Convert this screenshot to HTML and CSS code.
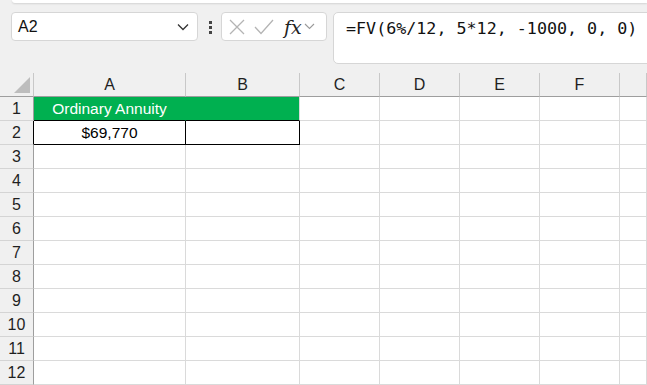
FILE: index.html
```html
<!DOCTYPE html>
<html lang="en">
<head>
<meta charset="UTF-8">
<meta name="viewport" content="width=device-width, initial-scale=1.0">
<title>Ordinary Annuity</title>
<link rel="stylesheet" href="styles.css">
</head>
<body>
    <div id="ribbon-edge"></div>
    <div id="toolbar">
        <div id="name-box">
            <span>A2</span>
            <svg width="12" height="8" viewBox="0 0 12 8"><path d="M1 1.5 L6 6.5 L11 1.5" fill="none" stroke="#333" stroke-width="1.3"/></svg>
        </div>
        <div id="dots"><i></i><i></i><i></i></div>
        <div id="func-box">
            <svg width="16" height="16" viewBox="0 0 16 16"><path d="M1 1 L15 15 M15 1 L1 15" stroke="#b4b4b4" stroke-width="1.3"/></svg>
            <svg width="20" height="16" viewBox="0 0 20 16"><path d="M1 8 L7 14.5 L19 1" fill="none" stroke="#b4b4b4" stroke-width="1.3"/></svg>
            <span id="fx">fx</span>
            <svg width="11" height="7" viewBox="0 0 11 7"><path d="M1 1 L5.5 5.5 L10 1" fill="none" stroke="#9a9a9a" stroke-width="1.1"/></svg>
        </div>
        <div id="formula">=FV(6%/12, 5*12, -1000, 0, 0)</div>
    </div>

    <div id="sheet">
        <div class="row head-row">
            <div class="corner"><i></i></div>
            <div>A</div><div>B</div><div>C</div><div>D</div><div>E</div><div>F</div><div></div>
        </div>
        <div class="row">
            <div class="rh">1</div>
            <div class="green a1">Ordinary Annuity</div><div class="green b1"></div>
            <div></div><div></div><div></div><div></div><div></div>
        </div>
        <div class="row">
            <div class="rh rh-boxed">2</div>
            <div class="boxed">$69,770</div><div class="boxed"></div>
            <div></div><div></div><div></div><div></div><div></div>
        </div>
        <div class="row"><div class="rh">3</div><div></div><div></div><div></div><div></div><div></div><div></div><div></div></div>
        <div class="row"><div class="rh">4</div><div></div><div></div><div></div><div></div><div></div><div></div><div></div></div>
        <div class="row"><div class="rh">5</div><div></div><div></div><div></div><div></div><div></div><div></div><div></div></div>
        <div class="row"><div class="rh">6</div><div></div><div></div><div></div><div></div><div></div><div></div><div></div></div>
        <div class="row"><div class="rh">7</div><div></div><div></div><div></div><div></div><div></div><div></div><div></div></div>
        <div class="row"><div class="rh">8</div><div></div><div></div><div></div><div></div><div></div><div></div><div></div></div>
        <div class="row"><div class="rh">9</div><div></div><div></div><div></div><div></div><div></div><div></div><div></div></div>
        <div class="row"><div class="rh">10</div><div></div><div></div><div></div><div></div><div></div><div></div><div></div></div>
        <div class="row"><div class="rh">11</div><div></div><div></div><div></div><div></div><div></div><div></div><div></div></div>
        <div class="row"><div class="rh">12</div><div></div><div></div><div></div><div></div><div></div><div></div><div></div></div>
    </div>
</body>
</html>
```

FILE: styles.css
```css
body {
    margin: 0;
    padding: 0;
    background-color: #f0f0f0;
    font-family: "Liberation Sans", Arial, sans-serif;
    color: #1f1f1f;
    overflow: hidden;
}
#ribbon-edge {
    height: 3px;
    margin-left: 12px;
    background-color: #fff;
    border-bottom-left-radius: 4px;
    box-shadow: 0 1px 2px rgba(0, 0, 0, 0.12);
}
#toolbar {
    display: flex;
    align-items: flex-start;
    height: 61px;
    padding-top: 9px;
    padding-left: 11px;
}
#name-box {
    display: flex;
    align-items: center;
    justify-content: space-between;
    box-sizing: border-box;
    width: 187px;
    height: 29px;
    padding: 0 8px 0 6px;
    background-color: #fff;
    border: 1px solid #d6d6d6;
    border-radius: 4px;
    font-size: 16px;
    color: #111;
}
#dots {
    display: flex;
    flex-direction: column;
    gap: 2px;
    margin: 9px 9px 0 11px;
}
#dots i {
    width: 3px;
    height: 3px;
    background-color: #444;
}
#func-box {
    display: flex;
    align-items: center;
    box-sizing: border-box;
    width: 106px;
    height: 29px;
    padding-left: 7px;
    background-color: #fff;
    border: 1px solid #d6d6d6;
    border-radius: 4px;
    gap: 9px;
}
#fx {
    font-family: "DejaVu Serif", serif;
    font-style: italic;
    font-size: 19px;
    color: #222;
    margin-left: 1px;
    margin-right: -7px;
}
#formula {
    flex: 1;
    box-sizing: border-box;
    height: 52px;
    margin-left: 6px;
    margin-right: -10px;
    padding: 5px 12px;
    background-color: #fff;
    border: 1px solid #d6d6d6;
    border-radius: 5px;
    font-family: "DejaVu Sans Mono", monospace;
    font-size: 16.7px;
    color: #111;
}
#sheet {
    background-color: #fff;
}
.row {
    display: grid;
    grid-template-columns: 34px 152px 114px 80px 80px 80px 80px 1fr;
    height: 24px;
}
.row > div {
    box-sizing: border-box;
    border-right: 1px solid #dadada;
    border-bottom: 1px solid #dadada;
    font-size: 15.5px;
    line-height: 23px;
    text-align: center;
    color: #000;
}
.head-row {
    background-color: #f0f0f0;
}
.head-row > div {
    border-right-color: #c8c8c8;
    border-bottom-color: #9e9e9e;
    color: #1f1f1f;
    font-size: 16px;
}
.corner {
    position: relative;
}
.corner i {
    position: absolute;
    right: 3px;
    bottom: 3px;
    width: 0;
    height: 0;
    border-left: 16px solid transparent;
    border-bottom: 16px solid #bdbdbd;
}
.row > .rh {
    background-color: #f0f0f0;
    border-right-color: #9e9e9e;
    border-bottom-color: #d4d4d4;
    color: #1f1f1f;
    font-size: 16px;
}
.row > .green {
    background-color: #00b050;
    color: #fff;
    border-bottom-color: #000;
    border-right-color: #00b050;
}
.row > .b1 {
    border-right-color: #dadada;
}
.row > .boxed {
    border-right-color: #000;
    border-bottom-color: #000;
}
.row > .rh-boxed {
    border-right-color: #000;
}
```
